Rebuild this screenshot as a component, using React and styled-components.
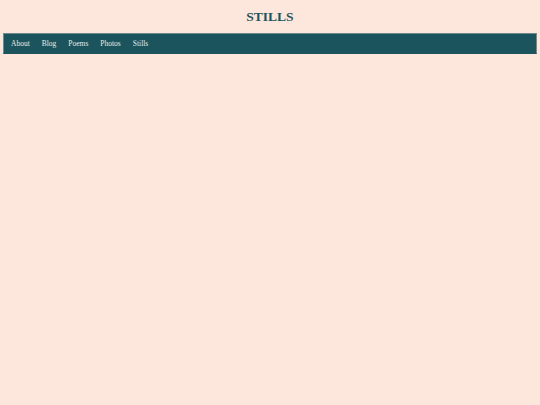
import React from 'react';
import styled, { createGlobalStyle } from 'styled-components';

const GlobalStyle = createGlobalStyle`
  html, body {
    margin: 0;
    padding: 0;
    background-color: #fde6dc;
    font-family: "Liberation Serif", "Times New Roman", serif;
  }
`;

const Page = styled.div`
  min-height: 405px;
  padding: 0 3px;
`;

const Title = styled.h1`
  margin: 0;
  padding: 8px 0 8px;
  color: #1c545e;
  font-size: 13.5px;
  font-weight: bold;
  line-height: 17px;
  text-align: center;
`;

const Nav = styled.nav`
  display: flex;
  align-items: center;
  height: 19px;
  padding: 0 1px;
  background-color: #1c545e;
  border: 1px solid #6f8a8d;
  border-bottom-color: #1c545e;
`;

const NavLink = styled.a`
  padding: 0 6px;
  color: #e6ece9;
  font-size: 7.5px;
  line-height: 19px;
  text-decoration: none;
`;

const links = ['About', 'Blog', 'Poems', 'Photos', 'Stills'];

const App = () => (
  <Page>
    <GlobalStyle />
    <Title>STILLS</Title>
    <Nav>
      {links.map((l) => (
        <NavLink key={l} href="#">
          {l}
        </NavLink>
      ))}
    </Nav>
  </Page>
);

export default App;
